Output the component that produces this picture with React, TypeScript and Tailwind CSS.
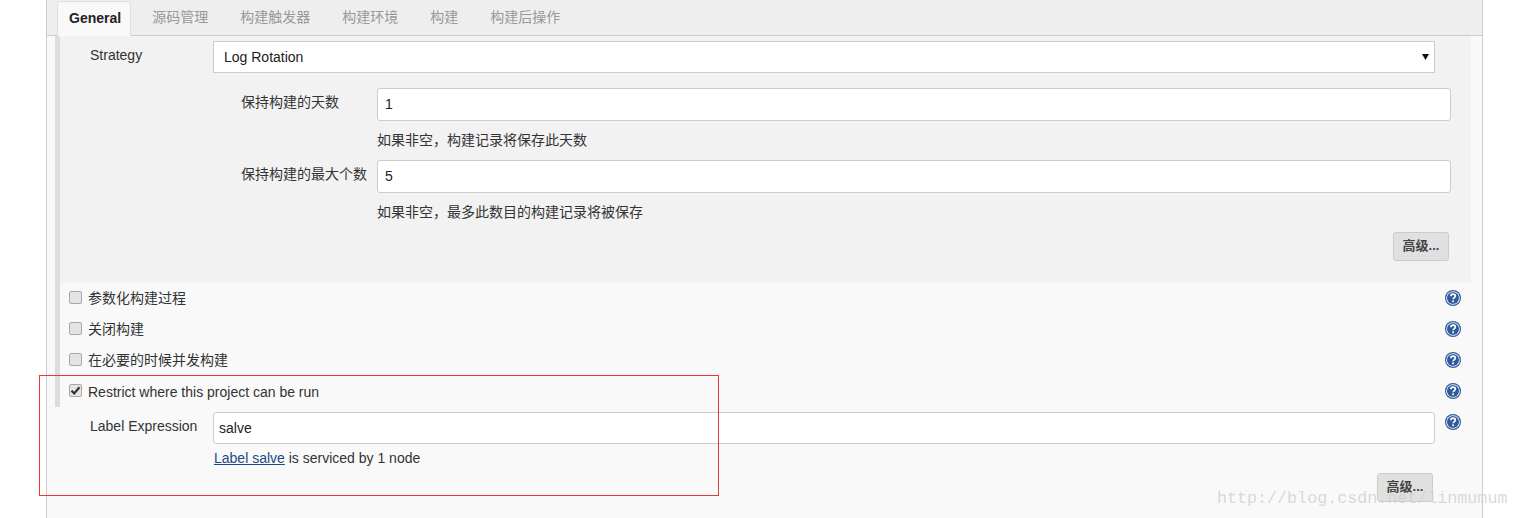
const FONT = "font-['Liberation_Sans','Noto_Sans_CJK_SC',sans-serif]";

const TABS = ['源码管理', '构建触发器', '构建环境', '构建', '构建后操作'];
const CHECKS = [
  { label: '参数化构建过程', checked: false },
  { label: '关闭构建', checked: false },
  { label: '在必要的时候并发构建', checked: false },
  { label: 'Restrict where this project can be run', checked: true },
];

function HelpIcon() {
  return (
    <svg width="16" height="16" viewBox="0 0 16 16" className="block shrink-0">
      <circle cx="8" cy="8" r="8" fill="#2f5b9d" />
      <circle cx="8" cy="8" r="6.8" fill="#fff" />
      <circle cx="8" cy="8" r="6" fill="#2f5b9d" />
      <path d="M5.9 6.2c0-1.3 1-2 2.2-2s2.2.7 2.2 1.9c0 1.5-2.1 1.6-2.1 3.2" fill="none" stroke="#fff" strokeWidth="1.7" />
      <rect x="7.2" y="10.4" width="1.7" height="1.8" fill="#fff" />
    </svg>
  );
}

function Checkbox({ checked }: { checked: boolean }) {
  return (
    <span className="mb-[2px] flex h-[13px] w-[13px] shrink-0 items-center justify-center rounded-[2px] border border-[#a8a8a8] bg-[#e4e4e4]">
      {checked && (
        <svg width="11" height="11" viewBox="0 0 11 11">
          <path d="M1.5 5.8 4.2 8.4 9.5 2.3" fill="none" stroke="#333" strokeWidth="2.2" />
        </svg>
      )}
    </span>
  );
}

function AdvancedButton({ className }: { className: string }) {
  return (
    <button className={`flex h-[29px] w-[56px] items-center justify-center rounded-[3px] border border-[#ccc] bg-[#e0e0e0] pb-[2px] text-[13px] font-bold text-[#444] ${className}`}>
      高级...
    </button>
  );
}

function NumberRow({ label, value, help }: { label: string; value: string; help: string }) {
  return (
    <div className="ml-[181px]">
      <div className="flex">
        <div className="w-[136px] pt-[4px] text-[14px] leading-[20px] text-[#333]">{label}</div>
        <input
          readOnly
          value={value}
          className="h-[33px] w-[1074px] rounded-[3px] border border-[#ccc] bg-white px-[7px] pb-[2px] text-[14px] text-[#222] outline-none"
        />
      </div>
      <div className="ml-[136px] mt-[9px] text-[14px] leading-[20px] text-[#333]">{help}</div>
    </div>
  );
}

export default function App() {
  return (
    <div className={`relative h-[518px] w-[1518px] overflow-hidden bg-white ${FONT}`}>
      <div className="ml-[46px] h-full w-[1437px] border-x border-[#ccc] bg-[#f9f9f9]">
        {/* Tabs */}
        <div className="flex h-[36px] border-b border-[#ccc] bg-[#eee] pl-[10px] pt-[1px]">
          <div className="h-[35px] rounded-t-[4px] border border-b-0 border-[#ddd] bg-[#f9f9f9] pl-[11px] pr-[9px] text-[14px] font-bold leading-[33px] text-[#222]">
            General
          </div>
          <div className="ml-[5px] flex">
            {TABS.map((t) => (
              <div key={t} className="px-[16px] text-[14px] leading-[33px] text-[#999]">
                {t}
              </div>
            ))}
          </div>
        </div>

        <div className="ml-[8px] w-[1416px] border-l-[5px] border-[#ddd]">
          {/* Log rotation block */}
          <div className="h-[247px] bg-[#f2f2f2] pt-[5px]">
            <div className="flex">
              <div className="w-[153px] pl-[30px] text-[14px] leading-[28px] text-[#333]">Strategy</div>
              <div className="relative">
                <select className="block h-[32px] w-[1222px] appearance-none border border-[#ccc] bg-white pl-[10px] text-[14px] text-[#222] outline-none">
                  <option>Log Rotation</option>
                </select>
                <svg width="7" height="7" viewBox="0 0 7 7" className="absolute right-[6px] top-[12px]">
                  <path d="M0 1h7L3.5 7z" fill="#111" />
                </svg>
              </div>
            </div>
            <div className="mt-[15px] flex flex-col gap-[10px]">
              <NumberRow label="保持构建的天数" value="1" help="如果非空，构建记录将保存此天数" />
              <NumberRow label="保持构建的最大个数" value="5" help="如果非空，最多此数目的构建记录将被保存" />
            </div>
            <AdvancedButton className="ml-[1333px] mt-[10px]" />
          </div>

          {/* Option rows */}
          <div>
            {CHECKS.map((c) => (
              <div key={c.label} className="flex h-[31px] items-center pl-[9px] pr-[10px]">
                <Checkbox checked={c.checked} />
                <span className={`ml-[6px] text-[14px] text-[#333] ${c.checked ? 'mt-[2px]' : ''}`}>{c.label}</span>
                <span className="mb-[2px] ml-auto">
                  <HelpIcon />
                </span>
              </div>
            ))}
          </div>
        </div>

        {/* Label expression */}
        <div className="ml-[13px] mt-[5px] flex">
          <div className="w-[153px] pl-[31px] text-[14px] leading-[28px] text-[#333]">
            <span className="-ml-[1px] block">Label Expression</span>
          </div>
          <div>
            <input
              readOnly
              value="salve"
              className="block h-[32px] w-[1222px] rounded-[3px] border border-[#ccc] bg-white px-[5px] text-[14px] text-[#222] outline-none"
            />
            <div className="ml-[1px] mt-[4px] text-[14px] leading-[20px] text-[#333]">
              <a href="#" className="text-[#204a87] underline">
                Label salve
              </a>{' '}
              is serviced by 1 node
            </div>
            <AdvancedButton className="ml-[1164px] mt-[5px]" />
          </div>
          <span className="ml-[10px] mt-[2px]">
            <HelpIcon />
          </span>
        </div>
      </div>

      {/* Red annotation box */}
      <div className="absolute left-[39px] top-[375px] h-[121px] w-[680px] border border-[#e53935]" />

      {/* Blog watermark */}
      <div className="absolute left-[1217px] top-[489px] font-['Liberation_Mono',monospace] text-[16.7px] leading-[20px] text-[#d0d0ca]/80">
        http://blog.csdn.net/linmumum
      </div>
    </div>
  );
}
